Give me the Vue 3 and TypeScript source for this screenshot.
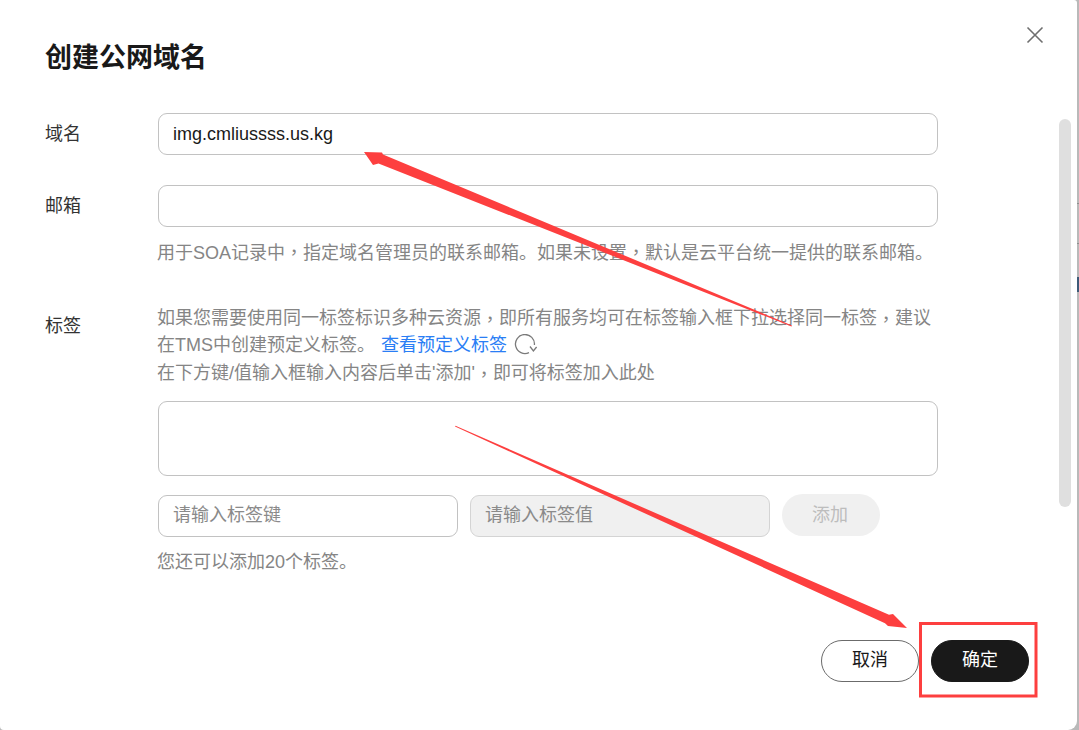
<script setup lang="ts">
const domain = 'img.cmliussss.us.kg'
</script>

<template>
  <div class="page">
    <div class="dialog">
      <button class="close" aria-label="关闭">
        <svg width="18" height="18" viewBox="0 0 18 18"><path d="M1.5 1.5 16.5 16.5M16.5 1.5 1.5 16.5" stroke="#6f6f6f" stroke-width="1.6" fill="none" /></svg>
      </button>
      <h1 class="title">创建公网域名</h1>
      <div class="body">
        <div class="row">
          <label class="label">域名</label>
          <div class="ctl"><input class="input" :value="domain" readonly /></div>
        </div>
        <div class="row row-mail">
          <label class="label">邮箱</label>
          <div class="ctl">
            <input class="input" readonly />
            <p class="hint hint-mail">用于SOA记录中<span class="tc">，</span>指定域名管理员的联系邮箱。如果未设置<span class="tc">，</span>默认是云平台统一提供的联系邮箱。</p>
          </div>
        </div>
        <div class="row row-tag">
          <label class="label label-tag">标签</label>
          <div class="ctl">
            <div class="hint hint-tag">
              <p class="line">如果您需要使用同一标签标识多种云资源<span class="tc">，</span>即所有服务均可在标签输入框下拉选择同一标签<span class="tc">，</span>建议</p>
              <p class="line"><span>在TMS中创建预定义标签。</span><a class="link">查看预定义标签</a>
                <svg class="refresh" width="24" height="22" viewBox="0 0 24 22"><path d="M20.4 11A9.5 9.5 0 1 0 15 18.6" stroke="#7a7a7a" stroke-width="1.3" fill="none" /><path d="M16 12.5 19.4 17 22.6 13" stroke="#7a7a7a" stroke-width="1.3" fill="none" /></svg>
              </p>
              <p class="line">在下方键/值输入框输入内容后单击'添加'<span class="tc">，</span>即可将标签加入此处</p>
            </div>
            <div class="tagbox"></div>
            <div class="adder">
              <input class="input small" placeholder="请输入标签键" readonly />
              <input class="input small off" placeholder="请输入标签值" disabled />
              <button class="add" disabled>添加</button>
            </div>
            <p class="hint hint-left">您还可以添加20个标签。</p>
          </div>
        </div>
      </div>
      <div class="foot">
        <button class="btn">取消</button>
        <button class="btn primary">确定</button>
      </div>
      <div class="scroll"></div>
      <svg class="marks" width="1079" height="730" viewBox="0 0 1079 730">
        <polygon points="364,152 382,152.5 383,154.5 792,325.5 791.5,326.5 378.5,163.5 373,165" fill="#fd3f3f" />
        <polygon points="907,628 888,626 885,623.2 455,426.5 455.5,425.8 889,614.8 893,614" fill="#fd3f3f" />
        <rect x="920.5" y="623.5" width="115.5" height="72.5" fill="none" stroke="#fd3f3f" stroke-width="3" />
      </svg>
    </div>
    <i class="edge tick-a"></i>
    <i class="edge tick-b"></i>
    <i class="edge chip"></i>
  </div>
</template>

<style>
html, body { margin: 0; background: #b9b9b9; overflow: hidden; }
</style>

<style scoped>
* { box-sizing: border-box; }
.page { position: relative; width: 1079px; height: 730px; }
.dialog {
  position: relative;
  display: flex;
  flex-direction: column;
  width: 1077px;
  height: 730px;
  background: #fff;
  border-radius: 0 3px 9px 4px;
  font-family: "Liberation Sans", "Noto Sans CJK SC", sans-serif;
  font-size: 18px;
  color: #252b3a;
  overflow: hidden;
}
.title {
  margin: 39px 0 0 45px;
  font-size: 27px;
  line-height: 38px;
  font-weight: 700;
  color: #191919;
}
.close {
  position: absolute;
  top: 26px;
  left: 1026px;
  padding: 0;
  border: 0;
  background: none;
  line-height: 0;
}
.body { padding: 36px 0 0 45px; }
.row { display: flex; align-items: flex-start; }
.row-mail { margin-top: 30px; }
.row-tag { margin-top: 37px; }
.label {
  flex: 0 0 113px;
  line-height: 42px;
  color: #333;
}
.label-tag { line-height: 27px; padding-top: 9px; }
.ctl { width: 780px; }
.input {
  display: block;
  width: 100%;
  height: 42px;
  padding: 0 14px;
  border: 1px solid #c2c2c2;
  border-radius: 9px;
  background: #fff;
  font: inherit;
  color: #191919;
  outline: none;
}
.input::placeholder { color: #8a8a8a; opacity: 1; }
.hint {
  margin: 0 0 0 -1px;
  line-height: 27px;
  color: #858585;
}
.tc { font-family: "Noto Sans CJK TC", sans-serif; line-height: 0; }
.hint-mail { margin-top: 13px; white-space: nowrap; }
.hint-tag { padding-top: 0.5px; }
.line {
  display: flex;
  align-items: center;
  height: 27.5px;
  margin: 0;
  line-height: 27.5px;
  white-space: nowrap;
}
.hint-left { margin-top: 12px; }
.link { margin-left: 6px; color: #2a7ef5; }
.refresh { flex: none; margin: -2px 0 0 7px; }
.tagbox {
  margin-top: 14px;
  height: 75px;
  border: 1px solid #c2c2c2;
  border-radius: 9px;
}
.adder { display: flex; gap: 12px; margin-top: 19px; }
.small { width: 300px; flex: none; padding-bottom: 1px; }
.off { background: #f0f0f0; border-color: #d4d4d4; }
.add {
  width: 98px;
  height: 42px;
  margin-top: -1px;
  padding: 0 2px 5px 0;
  border: 0;
  border-radius: 21px;
  background: #f0f0f0;
  color: #bdbdbd;
  font: inherit;
}
.foot {
  position: absolute;
  right: 48px;
  top: 640px;
  display: flex;
  gap: 12px;
}
.btn {
  width: 98px;
  height: 42px;
  padding: 0 0 6px;
  border: 1px solid #6b6b6b;
  border-radius: 21px;
  background: #fff;
  color: #191919;
  font: inherit;
}
.primary { background: #191919; border-color: #191919; color: #fff; }
.scroll {
  position: absolute;
  left: 1059px;
  top: 119px;
  width: 12px;
  height: 388px;
  border-radius: 6px;
  background: #dfdfdf;
}
.marks { position: absolute; inset: 0; pointer-events: none; }
.edge { position: absolute; left: 1077px; width: 2px; }
.tick-a { top: 203px; height: 1px; background: #8f8f8f; }
.tick-b { top: 243px; height: 1px; background: #8f8f8f; }
.chip { top: 277px; height: 15px; background: #3d5a78; }
</style>
